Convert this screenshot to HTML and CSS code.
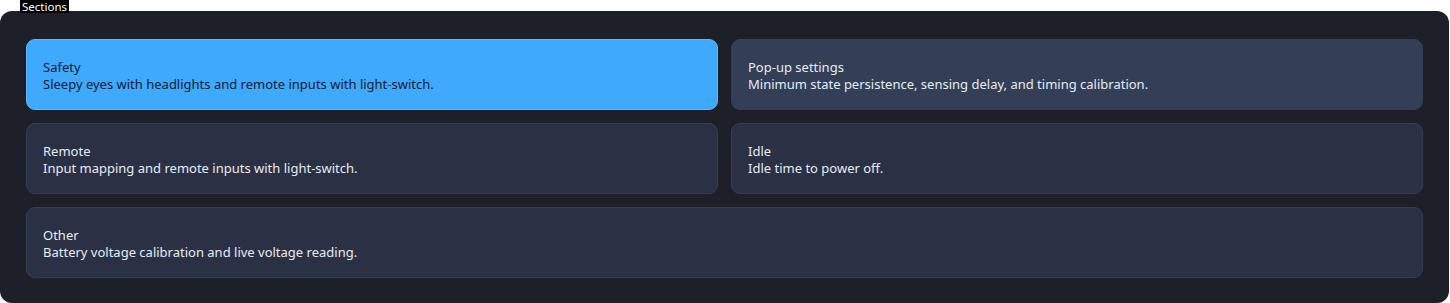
FILE: index.html
```html
<!DOCTYPE html>
<html lang="en">
<head>
<meta charset="utf-8">
<title>Sections</title>
<link rel="stylesheet" href="styles.css">
</head>
<body>
<div class="panel-wrap">
  <div class="legend">Sections</div>
  <div class="panel">
    <div class="grid">
      <div class="card card-active">
        <div class="card-title">Safety</div>
        <div class="card-desc">Sleepy eyes with headlights and remote inputs with light-switch.</div>
      </div>
      <div class="card card-hover">
        <div class="card-title">Pop-up settings</div>
        <div class="card-desc">Minimum state persistence, sensing delay, and timing calibration.</div>
      </div>
      <div class="card">
        <div class="card-title">Remote</div>
        <div class="card-desc">Input mapping and remote inputs with light-switch.</div>
      </div>
      <div class="card">
        <div class="card-title">Idle</div>
        <div class="card-desc">Idle time to power off.</div>
      </div>
      <div class="card card-wide">
        <div class="card-title">Other</div>
        <div class="card-desc">Battery voltage calibration and live voltage reading.</div>
      </div>
    </div>
  </div>
</div>
</body>
</html>
```
FILE: styles.css
```css
html, body {
  margin: 0;
  padding: 0;
  background: #ffffff;
}
body {
  font-family: "Noto Sans", "DejaVu Sans", sans-serif;
  width: 1450px;
  height: 303px;
  overflow: hidden;
}
.panel-wrap {
  display: flex;
  flex-direction: column;
  align-items: flex-start;
}
.legend {
  position: relative;
  z-index: 1;
  margin-left: 20px;
  padding: 0 2px;
  height: 13px;
  line-height: 13px;
  font-size: 11.5px;
  background: #000000;
  color: #ffffff;
}
.panel {
  margin-top: -2px;
  width: 1449px;
  height: 292px;
  box-sizing: border-box;
  background: #1d2029;
  border-radius: 12px;
  padding: 28px 26px 24px 26px;
}
.grid {
  display: grid;
  grid-template-columns: 1fr 1fr;
  gap: 13px;
}
.card {
  box-sizing: border-box;
  height: 71px;
  padding: 19px 16px 16px;
  border: 1px solid #363d52;
  border-radius: 9px;
  background: #2b3144;
  color: #e8ebf1;
  font-size: 13px;
  line-height: 17px;
}
.card-active {
  background: #3fa9fd;
  border-color: #5cb8ff;
  color: #172032;
}
.card-hover {
  background: #323f57;
  border-color: #323f57;
}
.card-wide {
  grid-column: 1 / span 2;
}
.card-title, .card-desc {
  white-space: nowrap;
}
```
